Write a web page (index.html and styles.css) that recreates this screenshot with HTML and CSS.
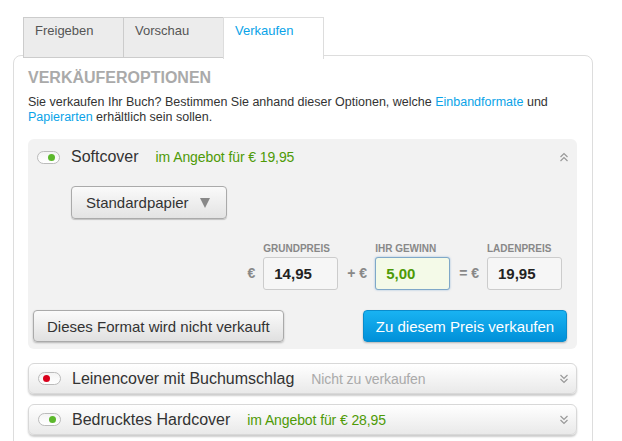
FILE: index.html
```html
<!DOCTYPE html>
<html lang="de">

<head>
    <meta charset="UTF-8">
    <title>Verkaufen</title>
    <link rel="stylesheet" href="styles.css">
</head>

<body>
    <!-- Tabs -->
    <div class="tabs">
        <div class="tab">Freigeben</div>
        <div class="tab">Vorschau</div>
        <div class="tab active">Verkaufen</div>
    </div>

    <div class="panel">
        <h2 class="title">VERKÄUFEROPTIONEN</h2>
        <p class="intro">Sie verkaufen Ihr Buch? Bestimmen Sie anhand dieser Optionen, welche <a href="#">Einbandformate</a> und <a href="#">Papierarten</a> erhältlich sein sollen.</p>

        <!-- Softcover (open) -->
        <div class="format open">
            <div class="format-head">
                <span class="toggle on"><span class="dot"></span></span>
                <span class="format-name">Softcover</span>
                <span class="status green">im Angebot für € 19,95</span>
                <svg class="chevron" width="10" height="10" viewBox="0 0 10 10">
                    <polyline points="1.5,5 5,1.5 8.5,5" />
                    <polyline points="1.5,9 5,5.5 8.5,9" />
                </svg>
            </div>

            <div class="select">Standardpapier <span class="arrow"></span></div>

            <div class="prices">
                <span class="op">€</span>
                <div class="field">
                    <div class="label">GRUNDPREIS</div>
                    <div class="box">14,95</div>
                </div>
                <span class="op">+ €</span>
                <div class="field">
                    <div class="label">IHR GEWINN</div>
                    <div class="box focus">5,00</div>
                </div>
                <span class="op">= €</span>
                <div class="field">
                    <div class="label">LADENPREIS</div>
                    <div class="box">19,95</div>
                </div>
            </div>

            <div class="actions">
                <button class="btn">Dieses Format wird nicht verkauft</button>
                <button class="btn blue">Zu diesem Preis verkaufen</button>
            </div>
        </div>

        <!-- Leinencover (closed) -->
        <div class="format closed">
            <div class="format-head">
                <span class="toggle off"><span class="dot"></span></span>
                <span class="format-name">Leinencover mit Buchumschlag</span>
                <span class="status grey">Nicht zu verkaufen</span>
                <svg class="chevron" width="10" height="10" viewBox="0 0 10 10">
                    <polyline points="1.5,1 5,4.5 8.5,1" />
                    <polyline points="1.5,5 5,8.5 8.5,5" />
                </svg>
            </div>
        </div>

        <!-- Hardcover (closed) -->
        <div class="format closed">
            <div class="format-head">
                <span class="toggle on"><span class="dot"></span></span>
                <span class="format-name">Bedrucktes Hardcover</span>
                <span class="status green">im Angebot für € 28,95</span>
                <svg class="chevron" width="10" height="10" viewBox="0 0 10 10">
                    <polyline points="1.5,1 5,4.5 8.5,1" />
                    <polyline points="1.5,5 5,8.5 8.5,5" />
                </svg>
            </div>
        </div>
    </div>
</body>

</html>
```

FILE: styles.css
```css
body {
    margin: 0;
    background-color: #fff;
    font-family: "Liberation Sans", Arial, sans-serif;
    color: #333;
}

/* Tabs */
.tabs {
    display: flex;
    padding: 17px 0 0 23px;
    margin-bottom: -4px;
    position: relative;
    z-index: 1;
}

.tab {
    width: 100px;
    height: 41px;
    padding: 5px 0 0 11px;
    box-sizing: border-box;
    border: 1px solid #ccc;
    border-right: none;
    background-color: #ececec;
    font-size: 13px;
    color: #555;
}

.tab.active {
    width: 101px;
    height: 42px;
    border-color: #ddd;
    border-right: 1px solid #ddd;
    border-bottom: none;
    background-color: #fff;
    color: #0aa3e8;
}

/* Main panel */
.panel {
    margin: 0 29px 0 13px;
    height: 400px;
    border: 1px solid #ddd;
    border-radius: 8px;
    padding: 13px 15px 0 14px;
}

.title {
    margin: 0;
    font-size: 16px;
    font-weight: bold;
    color: #aaa;
}

.intro {
    margin: 8px 0 14px;
    font-size: 12.5px;
    line-height: 15px;
    color: #333;
}

.intro a {
    color: #0aa3e8;
    text-decoration: none;
}

/* Format sections */
.format {
    border-radius: 6px;
    margin-bottom: 10px;
}

.format.open {
    background-color: #f2f2f2;
    padding-bottom: 7px;
    margin-bottom: 14px;
}

.format.closed {
    border: 1px solid #d8d8d8;
    background: linear-gradient(#fff, #e9e9e9);
    box-shadow: 0 2px 2px rgba(0, 0, 0, 0.2);
}

.format-head {
    display: flex;
    align-items: center;
    height: 36px;
    padding: 0 8px 0 9px;
}

.format.closed .format-head {
    height: 29px;
    padding-right: 7px;
}

.toggle {
    width: 21px;
    height: 11px;
    border: 1px solid #bbb;
    border-radius: 7px;
    background: linear-gradient(#f4f4f4, #fff);
    position: relative;
    margin-right: 11px;
}

.dot {
    position: absolute;
    top: 2px;
    width: 7px;
    height: 7px;
    border-radius: 50%;
}

.toggle.on .dot {
    right: 4px;
    background-color: #5cb82c;
}

.toggle.off .dot {
    left: 4px;
    background-color: #d9001b;
}

.format-name {
    font-size: 16px;
    color: #333;
}

.status {
    font-size: 14px;
    margin-left: 17px;
    letter-spacing: -0.1px;
}

.status.green {
    color: #4e9a06;
}

.status.grey {
    color: #aaa;
}

.chevron {
    margin-left: auto;
    fill: none;
    stroke: #999;
    stroke-width: 1.2;
}

/* Paper select */
.select {
    display: inline-flex;
    align-items: center;
    margin: 11px 0 0 43px;
    height: 31px;
    padding: 0 16px 0 14px;
    border: 1px solid #aaa;
    border-radius: 4px;
    background: linear-gradient(#fafafa, #e3e3e3);
    box-shadow: 0 1px 1px rgba(0, 0, 0, 0.2);
    font-size: 15px;
    color: #333;
}

.arrow {
    margin-left: 11px;
    width: 0;
    height: 0;
    border-left: 5px solid transparent;
    border-right: 5px solid transparent;
    border-top: 10px solid #888;
}

/* Price inputs */
.prices {
    display: flex;
    align-items: flex-end;
    justify-content: flex-end;
    margin: 24px 15px 0 0;
}

.field {
    display: flex;
    flex-direction: column;
}

.label {
    font-size: 10px;
    font-weight: bold;
    color: #888;
    margin-bottom: 3px;
}

.box {
    width: 75px;
    height: 33px;
    box-sizing: border-box;
    padding: 0 0 0 10px;
    line-height: 31px;
    border: 1px solid #ccc;
    border-radius: 3px;
    background-color: #f6f6f6;
    font-size: 15px;
    font-weight: bold;
    color: #222;
}

.box.focus {
    border-color: #7fa8c8;
    background-color: #f4fae8;
    color: #4e9a06;
    box-shadow: 0 0 2px rgba(80, 140, 200, 0.6);
}

.op {
    font-size: 14px;
    font-weight: bold;
    color: #888;
    margin: 0 8px 9px 9px;
}

/* Buttons */
.actions {
    display: flex;
    justify-content: space-between;
    margin: 20px 10px 0 5px;
}

.btn {
    height: 32px;
    padding: 0 13px;
    border: 1px solid #aaa;
    border-radius: 4px;
    background: linear-gradient(#fbfbfb, #e0e0e0);
    box-shadow: 0 1px 2px rgba(0, 0, 0, 0.25);
    font-family: "Liberation Sans", Arial, sans-serif;
    font-size: 15px;
    color: #333;
    white-space: nowrap;
}

.btn.blue {
    width: 204px;
    padding: 0;
    border-color: #0a8ccc;
    background: linear-gradient(#19b3f2, #0090d9);
    color: #fff;
}
```
